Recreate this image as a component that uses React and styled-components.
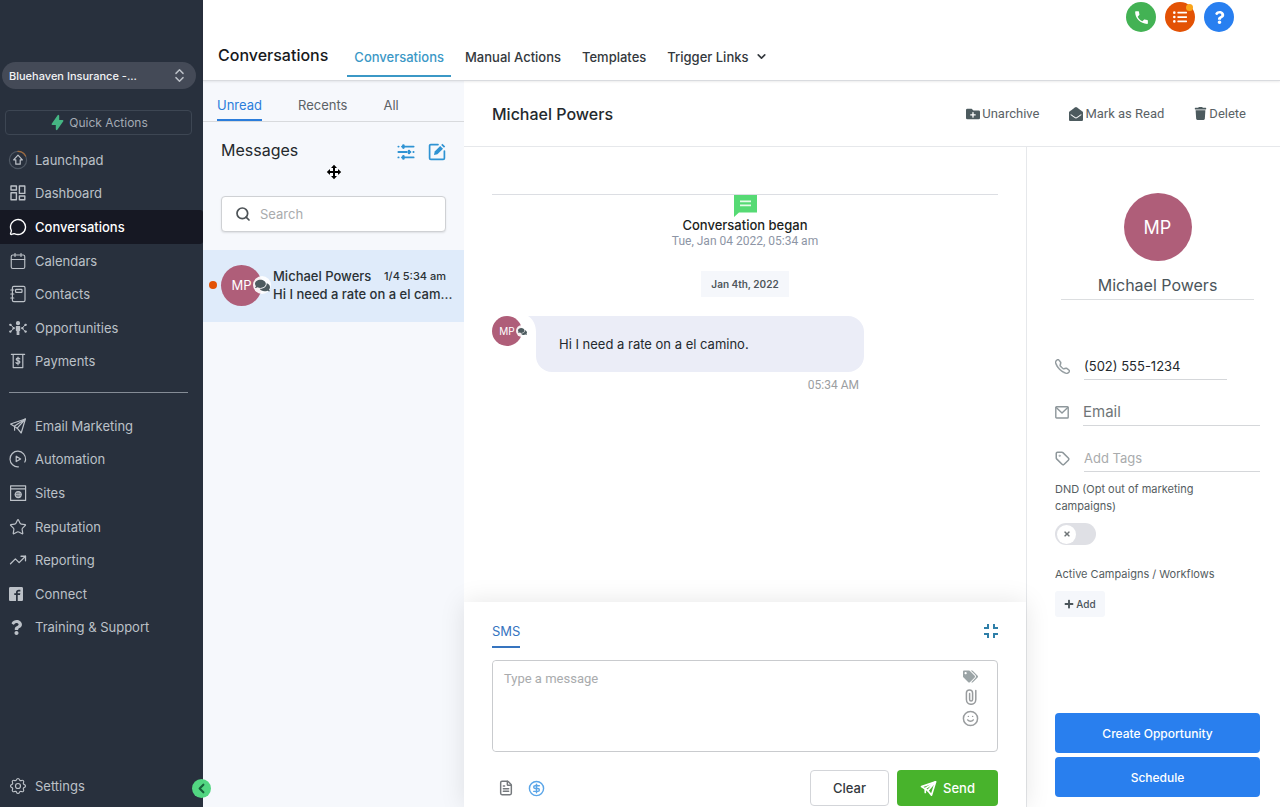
import React, { useState } from 'react';
import styled, { createGlobalStyle } from 'styled-components';
import {
  Calendar,
  ChevronDown,
  ChevronLeft,
  ChevronsUpDown,
  CircleDollarSign,
  FileText,
  MessageCircle,
  Search,
  Smile,
  Star,
  Tag,
  TrendingUp
} from 'lucide-react';
import {
  FaComments,
  FaEnvelopeOpen,
  FaFolderPlus,
  FaListUl,
  FaPlus,
  FaQuestion,
  FaTags,
  FaTimes,
  FaTrash
} from 'react-icons/fa';
import { BsTelephone } from 'react-icons/bs';
import { HiLightningBolt } from 'react-icons/hi';
import { ImFacebook2 } from 'react-icons/im';
import { MdPhone } from 'react-icons/md';
import { TbSettings } from 'react-icons/tb';

const stroke = {
  fill: 'none',
  stroke: 'currentColor',
  strokeWidth: 1.2,
  strokeLinecap: 'round',
  strokeLinejoin: 'round'
};

const LaunchpadIcon = () => (
  <svg width="20" height="20" viewBox="0 0 20 20" {...stroke}>
    <circle cx="10" cy="10" r="8.6" stroke="#4f5864" />
    <path d="M10 1.4A8.6 8.6 0 0 1 17.6 6" stroke="#a06a3c" />
    <path d="M10 5.2l4.4 4.6h-2.2v4.4H7.8V9.8H5.6z" />
  </svg>
);

const DashboardIcon = () => (
  <svg width="18" height="18" viewBox="0 0 18 18" {...stroke} strokeWidth="1.4">
    <rect x="2" y="2" width="5.4" height="4" />
    <rect x="2" y="8.8" width="5.4" height="7" />
    <rect x="10.4" y="2" width="5.4" height="7.4" />
    <rect x="10.4" y="12" width="5.4" height="3.8" />
  </svg>
);

const ContactsIcon = () => (
  <svg width="18" height="18" viewBox="0 0 18 18" {...stroke}>
    <rect x="3.4" y="1.4" width="12.6" height="15.2" rx="1.4" />
    <rect x="6.6" y="4.4" width="6.4" height="3" rx="0.6" />
    <path d="M1.8 5h3M1.8 9h3M1.8 13h3" />
  </svg>
);

const OpportunitiesIcon = () => (
  <svg width="18" height="18" viewBox="0 0 18 18" {...stroke}>
    <circle cx="9" cy="4.2" r="1.5" fill="currentColor" />
    <path d="M7.4 7.6h3.2v3.6l-.8.6v3.6H8.2v-3.6l-.8-.6z" fill="currentColor" />
    <path d="M2 6.2l2.4 2.4M4.4 9.8L2 12.2M16 6.2l-2.4 2.4M13.6 9.8l2.4 2.4" strokeWidth="1" />
    <path d="M1.2 5.8h.4M1.2 12.6h.4M16.4 5.8h.4M16.4 12.6h.4M4.4 9.2h.4M13.2 9.2h.4" strokeWidth="2.2" />
  </svg>
);

const PaymentsIcon = () => (
  <svg width="18" height="18" viewBox="0 0 18 18" {...stroke}>
    <path d="M2.4 2.4h13.2M4.2 2.4v13.2h9.6V2.4" />
    <path d="M10.8 6.9c-.4-.6-1-.8-1.8-.8-1 0-1.8.4-1.8 1.2 0 1.8 3.7.9 3.7 2.8 0 .9-.8 1.4-1.9 1.4-.9 0-1.6-.3-2-.9M9 5v7.8" />
  </svg>
);

const PlaneIcon = ({ size = 18, weight = 1.2 }) => (
  <svg width={size} height={size} viewBox="0 0 18 18" {...stroke} strokeWidth={weight}>
    <path d="M1.6 7L16.4 2 12.2 16 8.2 11.2z" />
    <path d="M8.2 11.2L16.4 2 5.6 9v4.2" />
  </svg>
);

const AutomationIcon = () => (
  <svg width="18" height="18" viewBox="0 0 18 18" {...stroke}>
    <path d="M9.4 16.8A7.8 7.8 0 1 1 16.6 9.6c-.1.9-.4 1.7-.8 2.4" />
    <path d="M7.2 6.2v5.4l4.4-2.7z" />
  </svg>
);

const SitesIcon = () => (
  <svg width="18" height="18" viewBox="0 0 18 18" {...stroke}>
    <path d="M1.6 1.8h15v14.6h-15zM1.6 4.8h15" />
    <circle cx="9.2" cy="10.6" r="3" />
    <path d="M6.2 10.6h6M9.2 7.6v6M8 8v5M10.4 8v5" strokeWidth="0.8" />
  </svg>
);

const SlidersIcon = () => (
  <svg width="18" height="16" viewBox="0 0 18 16" {...stroke} strokeWidth="1.9">
    <path d="M1.4 2.6h.2M5 2.6h11.6M1.4 8h8.4M13 8h.4M16.4 8h.2M1.4 13.4h.2M5 13.4h11.6" />
    <path d="M6.4 1.6v2M12 7v2M6.4 12.4v2" strokeWidth="2.6" />
  </svg>
);

const ComposeIcon = () => (
  <svg width="18" height="18" viewBox="0 0 18 18" {...stroke} strokeWidth="1.7">
    <path d="M10 1.6H2.8c-.7 0-1.2.5-1.2 1.2v12.4c0 .7.5 1.2 1.2 1.2h12.4c.7 0 1.2-.5 1.2-1.2V8" />
    <path d="M6 12l.7-3.4 5.5-5.6 2.8 2.7-5.6 5.6z" fill="currentColor" stroke="none" />
    <path d="M13.2 2l1.2-1.2 2.8 2.8L16 4.8z" fill="currentColor" stroke="none" />
  </svg>
);

const StartedIcon = () => (
  <svg width="23" height="22" viewBox="0 0 23 22">
    <path d="M0 0h23v17.4H5L0 22z" fill="#56da74" />
    <path d="M6 6.4h11M6 10.4h11" stroke="#e4fbe9" strokeWidth="1.6" />
  </svg>
);

const CollapseIcon = () => (
  <svg width="14" height="14" viewBox="0 0 14 14" fill="none" stroke="currentColor" strokeWidth="2">
    <path d="M0 4h4V0M10 0v4h4M0 10h4v4M10 14v-4h4" />
  </svg>
);

const ClipIcon = () => (
  <svg width="12" height="16" viewBox="0 0 12 16" {...stroke} strokeWidth="1.5">
    <path d="M10.8 1.4v9.2a4.6 4.6 0 0 1-9.4 0V4a3 3 0 0 1 6.2 0v6.4a1.5 1.5 0 0 1-3 0V4.6" />
  </svg>
);

const MailIcon = () => (
  <svg width="14" height="13" viewBox="0 0 14 13" {...stroke} strokeWidth="1.4">
    <rect x="0.8" y="0.8" width="12.4" height="11.2" rx="0.8" />
    <path d="M1.2 1.4L7 7l5.8-5.6" />
  </svg>
);

const MoveCursor = () => (
  <svg width="16" height="16" viewBox="0 0 16 16">
    <path
      d="M8 .8l3 3.2H9v3h3V5l3.2 3L12 11V9H9v3h2l-3 3.2L5 12h2V9H4v2L.8 8 4 5v2h3V4H5z"
      fill="#000"
      stroke="#fff"
      strokeWidth="1"
      paintOrder="stroke"
    />
  </svg>
);

const mainLinks = [
  { label: 'Launchpad', icon: <LaunchpadIcon /> },
  { label: 'Dashboard', icon: <DashboardIcon /> },
  { label: 'Conversations', icon: <MessageCircle size={18} strokeWidth={1.8} />, active: true },
  { label: 'Calendars', icon: <Calendar size={18} strokeWidth={1.5} /> },
  { label: 'Contacts', icon: <ContactsIcon /> },
  { label: 'Opportunities', icon: <OpportunitiesIcon /> },
  { label: 'Payments', icon: <PaymentsIcon /> }
];

const toolLinks = [
  { label: 'Email Marketing', icon: <PlaneIcon /> },
  { label: 'Automation', icon: <AutomationIcon /> },
  { label: 'Sites', icon: <SitesIcon /> },
  { label: 'Reputation', icon: <Star size={18} strokeWidth={1.6} /> },
  { label: 'Reporting', icon: <TrendingUp size={18} strokeWidth={1.7} /> },
  { label: 'Connect', icon: <ImFacebook2 size={14} />, flush: true },
  { label: 'Training & Support', icon: <FaQuestion size={15} />, flush: true }
];

const NavLinks = ({ links }) => (
  <NavGroup>
    {links.map(l => (
      <NavItem key={l.label} href="#" $active={l.active}>
        <NavIcon $flush={l.flush}>{l.icon}</NavIcon>
        {l.label}
      </NavItem>
    ))}
  </NavGroup>
);

const App = () => {
  const [dnd, setDnd] = useState(false);

  return (
    <Page>
      <GlobalStyle />
      <Sidebar>
        <Account>
          <AccountSelect aria-label="Account">
            <option>Bluehaven Insurance -...</option>
          </AccountSelect>
          <ChevronsUpDown size={17} strokeWidth={2} />
        </Account>
        <QuickActions>
          <HiLightningBolt size={17} color="#45b583" />
          Quick Actions
        </QuickActions>
        <NavLinks links={mainLinks} />
        <Divider />
        <NavLinks links={toolLinks} />
        <SidebarFooter>
          <NavItem href="#">
            <NavIcon>
              <TbSettings size={20} strokeWidth={1.4} />
            </NavIcon>
            Settings
          </NavItem>
          <CloseSidebar aria-label="Collapse menu">
            <ChevronLeft size={15} strokeWidth={3.4} />
          </CloseSidebar>
        </SidebarFooter>
      </Sidebar>

      <Main>
        <TopBar>
          <TopActions>
            <RoundButton $color="#43b254" aria-label="Call">
              <MdPhone size={17} />
            </RoundButton>
            <RoundButton $color="#e35205" aria-label="Tasks">
              <FaListUl size={14} />
              <Dot />
            </RoundButton>
            <RoundButton $color="#287ff0" aria-label="Help">
              <FaQuestion size={13} />
            </RoundButton>
          </TopActions>
          <TopNav>
            <Title>Conversations</Title>
            <TopLink href="#" $active>
              Conversations
            </TopLink>
            <TopLink href="#">Manual Actions</TopLink>
            <TopLink href="#">Templates</TopLink>
            <TopLink href="#">
              Trigger Links
              <ChevronDown size={13} strokeWidth={3} />
            </TopLink>
          </TopNav>
        </TopBar>

        <Content>
          <Inbox>
            <InboxTabs>
              <InboxTab href="#" $active>
                Unread
              </InboxTab>
              <InboxTab href="#">Recents</InboxTab>
              <InboxTab href="#">All</InboxTab>
            </InboxTabs>
            <InboxHeader>
              <InboxTitle>Messages</InboxTitle>
              <IconButton $color="#2f93d3" aria-label="Filter">
                <SlidersIcon />
              </IconButton>
              <IconButton $color="#2f93d3" aria-label="New message">
                <ComposeIcon />
              </IconButton>
              <Pointer>
                <MoveCursor />
              </Pointer>
            </InboxHeader>
            <SearchBox>
              <Search size={16} strokeWidth={2.6} />
              <SearchInput placeholder="Search" aria-label="Search" />
            </SearchBox>
            <Thread href="#">
              <UnreadDot />
              <Avatar $size={41} $font={13}>
                MP
                <Badge $size={18}>
                  <FaComments size={15} />
                </Badge>
              </Avatar>
              <ThreadBody>
                <ThreadTop>
                  Michael Powers
                  <ThreadTime>1/4 5:34 am</ThreadTime>
                </ThreadTop>
                <Preview>Hi I need a rate on a el cam...</Preview>
              </ThreadBody>
            </Thread>
          </Inbox>

          <Conversation>
            <ContactBar>
              <ContactTitle>Michael Powers</ContactTitle>
              <ContactAction>
                <FaFolderPlus size={14} />
                Unarchive
              </ContactAction>
              <ContactAction>
                <FaEnvelopeOpen size={14} />
                Mark as Read
              </ContactAction>
              <ContactAction>
                <FaTrash size={13} />
                Delete
              </ContactAction>
            </ContactBar>
            <Panels>
              <Chat>
                <History>
                  <Began>
                    <StartedIcon />
                    <BeganTitle>Conversation began</BeganTitle>
                    <BeganDate>Tue, Jan 04 2022, 05:34 am</BeganDate>
                  </Began>
                  <DayLabel>Jan 4th, 2022</DayLabel>
                  <Message>
                    <Avatar $size={30} $font={10}>
                      MP
                      <Badge $size={12}>
                        <FaComments size={9} />
                      </Badge>
                    </Avatar>
                    <Tail viewBox="0 0 14 16">
                      <path d="M0 0h14v16H8C8 9 5 3 0 0z" fill="#ebedf7" />
                    </Tail>
                    <Bubble>Hi I need a rate on a el camino.</Bubble>
                  </Message>
                  <MessageTime>05:34 AM</MessageTime>
                </History>
                <Composer>
                  <ComposerTop>
                    <ComposerTab href="#">SMS</ComposerTab>
                    <IconButton $color="#2f7fa8" aria-label="Shrink">
                      <CollapseIcon />
                    </IconButton>
                  </ComposerTop>
                  <MessageBox>
                    <MessageInput placeholder="Type a message" aria-label="Message" />
                    <MessageTools>
                      <IconButton $color="#9ba4a6" aria-label="Tags">
                        <FaTags size={15} />
                      </IconButton>
                      <IconButton $color="#999c9e" aria-label="Attach">
                        <ClipIcon />
                      </IconButton>
                      <IconButton $color="#999c9e" aria-label="Emoji">
                        <Smile size={17} strokeWidth={2.1} />
                      </IconButton>
                    </MessageTools>
                  </MessageBox>
                  <ComposerBottom>
                    <IconButton $color="#75797d" aria-label="Templates">
                      <FileText size={16} strokeWidth={2.2} />
                    </IconButton>
                    <IconButton $color="#5aa5e8" aria-label="Request payment">
                      <CircleDollarSign size={17} strokeWidth={2} />
                    </IconButton>
                    <ClearButton>Clear</ClearButton>
                    <SendButton>
                      <PlaneIcon size={17} weight={1.8} />
                      Send
                    </SendButton>
                  </ComposerBottom>
                </Composer>
              </Chat>

              <Details>
                <Avatar $size={68} $font={18}>
                  MP
                </Avatar>
                <DetailsName>Michael Powers</DetailsName>
                <Field htmlFor="phone">
                  <BsTelephone size={15} stroke="currentColor" strokeWidth={0.5} aria-label="Phone" />
                  <FieldInput id="phone" defaultValue="(502) 555-1234" $short />
                </Field>
                <Field htmlFor="email">
                  <MailIcon />
                  <FieldInput id="email" placeholder="Email" $large />
                </Field>
                <Field htmlFor="tags">
                  <Tag size={15} strokeWidth={2.4} />
                  <FieldInput id="tags" placeholder="Add Tags" />
                </Field>
                <SmallLabel htmlFor="dnd">DND (Opt out of marketing campaigns)</SmallLabel>
                <Toggle>
                  <ToggleInput
                    id="dnd"
                    type="checkbox"
                    checked={dnd}
                    onChange={e => setDnd(e.target.checked)}
                  />
                  <ToggleKnob>{!dnd && <FaTimes size={8} />}</ToggleKnob>
                </Toggle>
                <SmallText>Active Campaigns / Workflows</SmallText>
                <AddButton>
                  <FaPlus size={10} />
                  Add
                </AddButton>
                <DetailsFooter>
                  <PrimaryButton>Create Opportunity</PrimaryButton>
                  <PrimaryButton>Schedule</PrimaryButton>
                </DetailsFooter>
              </Details>
            </Panels>
          </Conversation>
        </Content>
      </Main>
    </Page>
  );
};

const GlobalStyle = createGlobalStyle`
  * {
    box-sizing: border-box;
  }

  body {
    margin: 0;
    font-family: Inter, sans-serif;
    font-size: 13px;
    color: #2a3135;
    background: #fff;
  }

  button, input, select, textarea {
    font: inherit;
    color: inherit;
    margin: 0;
    outline: none;
  }

  button {
    display: flex;
    align-items: center;
    justify-content: center;
    padding: 0;
    border: 0;
    background: none;
    cursor: pointer;
  }

  a {
    color: inherit;
    text-decoration: none;
  }

  svg {
    display: block;
    flex: none;
  }
`;

const Page = styled.div`
  display: flex;
  min-height: 100vh;
`;

const Sidebar = styled.nav`
  display: flex;
  flex-direction: column;
  flex: 0 0 203px;
  padding-top: 62px;
  background: #28303d;
  color: #bcc1c8;
`;

const Account = styled.div`
  display: grid;
  grid-template-columns: 1fr 34px;
  align-items: center;
  height: 27px;
  margin: 0 7px 0 2px;
  border-radius: 14px;
  background: #444a57;
`;

const AccountSelect = styled.select`
  grid-area: 1 / 1 / 2 / 3;
  height: 27px;
  padding: 0 34px 0 7px;
  border: 0;
  background: transparent;
  appearance: none;
  color: #f2f3f5;
  font-size: 11px;
  font-weight: 500;

  & + svg {
    grid-area: 1 / 2;
    justify-self: center;
    pointer-events: none;
  }
`;

const QuickActions = styled.button`
  gap: 3px;
  height: 25px;
  margin: 21px 11px 8px 5px;
  border: 1px solid #3d4653;
  border-radius: 4px;
  font-size: 12px;
  color: #a3aab4;
`;

const NavGroup = styled.div`
  display: flex;
  flex-direction: column;
  min-height: 235px;
`;

const NavItem = styled.a`
  display: flex;
  flex: 1;
  align-items: center;
  gap: 7px;
  padding-left: 8px;
  border-radius: 0 3px 3px 0;
  font-weight: ${props => (props.$active ? 500 : 400)};
  color: ${props => (props.$active ? '#fff' : '#bcc1c8')};
  background: ${props => (props.$active ? '#161823' : 'transparent')};
`;

const NavIcon = styled.span`
  display: flex;
  justify-content: ${props => (props.$flush ? 'flex-start' : 'center')};
  width: 20px;
  padding-left: ${props => (props.$flush ? '1px' : '0')};
`;

const Divider = styled.hr`
  height: 1px;
  margin: 14px 15px 16px 9px;
  border: 0;
  background: #858c96;
`;

const SidebarFooter = styled.div`
  display: flex;
  position: relative;
  height: 34px;
  margin: auto 0 4px;
`;

const CloseSidebar = styled.button`
  position: absolute;
  right: -8px;
  bottom: 5px;
  z-index: 2;
  width: 19px;
  height: 19px;
  border-radius: 50%;
  background: #52d681;
  color: #17603a;
`;

const Main = styled.main`
  display: flex;
  flex: 1;
  flex-direction: column;
  min-width: 0;
`;

const TopBar = styled.header`
  position: relative;
  z-index: 1;
  border-bottom: 1px solid #d9dbdf;
  box-shadow: 0 1px 2px rgba(0, 0, 0, 0.08);
`;

const TopActions = styled.div`
  display: flex;
  justify-content: flex-end;
  gap: 9px;
  padding: 2px 46px 0 0;
`;

const RoundButton = styled.button`
  position: relative;
  width: 30px;
  height: 30px;
  border-radius: 50%;
  color: #fff;
  background: ${props => props.$color};
`;

const Dot = styled.span`
  position: absolute;
  top: 2px;
  right: 2px;
  width: 7px;
  height: 7px;
  border-radius: 50%;
  background: #faa51a;
`;

const TopNav = styled.div`
  display: flex;
  align-items: flex-end;
  gap: 7px;
  height: 48px;
  padding: 0 15px 3px;
`;

const Title = styled.h1`
  margin: 0 12px 0 0;
  font-size: 16px;
  line-height: 44px;
  font-weight: 500;
  color: #17191c;
`;

const TopLink = styled.a`
  display: flex;
  align-items: center;
  gap: 6px;
  height: 42px;
  padding: 3px 7px 0;
  font-weight: 500;
  color: ${props => (props.$active ? '#3b98c6' : '#33383d')};
  border-bottom: 2px solid ${props => (props.$active ? '#3b98c6' : 'transparent')};
`;

const Content = styled.div`
  display: flex;
  flex: 1;
`;

const Inbox = styled.section`
  flex: 0 0 261px;
  min-width: 0;
  background: #f6f8fc;
`;

const InboxTabs = styled.div`
  display: flex;
  gap: 36px;
  height: 41px;
  padding: 0 14px;
  border-bottom: 1px solid #d8dadd;
`;

const InboxTab = styled.a`
  display: flex;
  align-items: center;
  padding-top: 10px;
  color: ${props => (props.$active ? '#2b7ddb' : '#5c6266')};
  border-bottom: 2px solid ${props => (props.$active ? '#2b7ddb' : 'transparent')};
`;

const IconButton = styled.button`
  color: ${props => props.$color};
`;

const InboxHeader = styled.div`
  display: flex;
  position: relative;
  align-items: flex-start;
  gap: 13px;
  padding: 18px 18px 0;

  ${IconButton} {
    height: 24px;
  }
`;

const InboxTitle = styled.h2`
  flex: 1;
  margin: 0;
  font-size: 16px;
  line-height: 20px;
  font-weight: 400;
  color: #24292d;
`;

const Pointer = styled.div`
  position: absolute;
  left: 123px;
  top: 42px;
`;

const SearchBox = styled.div`
  display: flex;
  align-items: center;
  gap: 9px;
  height: 36px;
  margin: 32px 18px 18px;
  padding: 0 13px;
  border: 1px solid #cfd1d4;
  border-radius: 4px;
  background: #fff;
  color: #4d5357;
  box-shadow: 0 1px 2px rgba(0, 0, 0, 0.1);
`;

const SearchInput = styled.input`
  width: 100%;
  border: 0;
  padding: 0;
  background: none;

  &::placeholder {
    color: #a9abad;
  }
`;

const Thread = styled.a`
  display: flex;
  align-items: center;
  gap: 4px;
  height: 72px;
  padding: 0 10px 2px 6px;
  background: #dfebfa;
`;

const UnreadDot = styled.span`
  width: 8px;
  height: 8px;
  border-radius: 50%;
  background: #e35205;
`;

const Avatar = styled.div`
  display: flex;
  position: relative;
  align-items: center;
  justify-content: center;
  flex: none;
  width: ${props => props.$size}px;
  height: ${props => props.$size}px;
  border-radius: 50%;
  font-size: ${props => props.$font}px;
  color: #fff;
  background: #af5e79;
`;

const Badge = styled.span`
  display: flex;
  position: absolute;
  align-items: center;
  justify-content: center;
  right: ${props => props.$size / -2}px;
  width: ${props => props.$size}px;
  height: ${props => props.$size}px;
  border-radius: 50%;
  color: #4d5b5f;
  background: rgba(255, 255, 255, 0.9);
`;

const ThreadBody = styled.div`
  flex: 1;
  min-width: 0;
  margin-left: 7px;
  font-weight: 500;
  line-height: 18px;
`;

const ThreadTop = styled.div`
  display: flex;
  justify-content: space-between;
  margin-right: 8px;
`;

const ThreadTime = styled.span`
  font-size: 11px;
`;

const Preview = styled.div`
  white-space: nowrap;
`;

const Conversation = styled.section`
  display: flex;
  flex: 1;
  flex-direction: column;
  min-width: 0;
`;

const ContactBar = styled.div`
  display: flex;
  align-items: center;
  gap: 30px;
  height: 66px;
  padding: 0 34px 0 28px;
  border-bottom: 1px solid #e6e8eb;
`;

const ContactTitle = styled.h2`
  flex: 1;
  margin: 0;
  font-size: 16px;
  font-weight: 500;
  color: #24292d;
`;

const ContactAction = styled.button`
  gap: 2px;
  font-family: Roboto, sans-serif;
  font-size: 13px;
  color: #5a6266;

  svg {
    color: #4d5b5f;
  }
`;

const Panels = styled.div`
  display: flex;
  flex: 1;
`;

const Chat = styled.div`
  display: flex;
  flex: 1;
  flex-direction: column;
  min-width: 0;
`;

const History = styled.div`
  display: flex;
  flex: 1;
  flex-direction: column;
  padding: 47px 28px 0;
`;

const Began = styled.div`
  display: flex;
  flex-direction: column;
  align-items: center;
  border-top: 1px solid #dcdee3;
`;

const BeganTitle = styled.div`
  line-height: 16px;
  font-weight: 500;
  color: #1c1f22;
`;

const BeganDate = styled.div`
  font-family: Roboto, sans-serif;
  font-size: 12px;
  line-height: 16px;
  color: #8d95a5;
`;

const DayLabel = styled.div`
  align-self: center;
  margin: 22px 0 19px;
  padding: 0 10px;
  font-size: 10px;
  line-height: 26px;
  font-weight: 600;
  color: #4f565b;
  background: #f5f7fb;
`;

const Message = styled.div`
  display: flex;
  margin-right: 134px;
`;

const Tail = styled.svg`
  width: 14px;
  height: 16px;
  margin-right: -6px;
  margin-left: 6px;
`;

const Bubble = styled.div`
  flex: 1;
  padding: 20px 23px;
  border-radius: 0 16px 16px 16px;
  line-height: 16px;
  color: #24292d;
  background: #ebedf7;
`;

const MessageTime = styled.div`
  margin: 5px 139px 0 0;
  font-family: Roboto, sans-serif;
  font-size: 12px;
  line-height: 16px;
  text-align: right;
  color: #9b9ea1;
`;

const Composer = styled.div`
  position: relative;
  padding: 20px 28px 1px;
  background: #fff;
  box-shadow: 0 0 24px rgba(0, 0, 0, 0.1);
`;

const ComposerTop = styled.div`
  display: flex;
  align-items: flex-start;
  justify-content: space-between;
`;

const ComposerTab = styled.a`
  padding-bottom: 6px;
  line-height: 18px;
  color: #3674bf;
  border-bottom: 2px solid #3674bf;

  & + button {
    padding-top: 2px;
  }
`;

const MessageBox = styled.div`
  display: flex;
  height: 92px;
  margin: 12px 0 18px;
  border: 1px solid #c9cbce;
  border-radius: 4px;
`;

const MessageInput = styled.textarea`
  flex: 1;
  padding: 10px 11px;
  border: 0;
  border-radius: 4px;
  resize: none;
  font-family: Roboto, sans-serif;
  font-size: 13px;
  line-height: 16px;

  &::placeholder {
    color: #a9abad;
  }
`;

const MessageTools = styled.div`
  display: flex;
  flex-direction: column;
  align-items: center;
  gap: 5px;
  padding: 8px 18px 0 0;
`;

const ComposerBottom = styled.div`
  display: flex;
  align-items: center;
  gap: 14px;
  padding-left: 6px;
`;

const FormButton = styled.button`
  height: 36px;
  border-radius: 4px;
  font-weight: 500;
  font-size: 13px;
`;

const ClearButton = styled(FormButton)`
  width: 79px;
  margin-left: auto;
  border: 1px solid #d3d5d9;
  color: #33383d;
`;

const SendButton = styled(FormButton)`
  gap: 6px;
  width: 101px;
  margin-left: -6px;
  color: #fff;
  background: #48b32c;
`;

const Details = styled.aside`
  display: flex;
  flex-direction: column;
  align-items: flex-start;
  flex: 0 0 254px;
  min-width: 0;
  padding: 46px 20px 10px 28px;
  border-left: 1px solid #e6e8eb;

  & > ${Avatar} {
    align-self: center;
  }
`;

const DetailsName = styled.h3`
  align-self: stretch;
  margin: 10px 6px 53px;
  padding: 4px 0;
  border-bottom: 1px solid #dcdee0;
  font-size: 16px;
  line-height: 20px;
  font-weight: 400;
  text-align: center;
  color: #4b555b;
`;

const Field = styled.label`
  display: flex;
  align-self: stretch;
  align-items: center;
  gap: 14px;
  height: 26px;
  margin-bottom: 20px;
  color: #8e979b;
`;

const FieldInput = styled.input`
  flex: 1;
  min-width: 0;
  height: 27px;
  margin-right: ${props => (props.$short ? '33px' : '0')};
  padding: 0;
  border: 0;
  border-bottom: 1px solid #d5d7da;
  font-size: ${props => (props.$large ? '15px' : '13px')};
  color: #24292d;

  &::placeholder {
    color: ${props => (props.$large ? '#6f7577' : '#a9abad')};
  }
`;

const SmallLabel = styled.label`
  margin: -10px 24px 0 0;
  font-size: 11px;
  line-height: 17px;
  color: #555d61;
`;

const SmallText = styled.div`
  margin-bottom: 8px;
  font-size: 11px;
  line-height: 17px;
  color: #555d61;
`;

const Toggle = styled.div`
  display: grid;
  align-items: center;
  margin: 8px 0 21px;
`;

const ToggleInput = styled.input`
  grid-area: 1 / 1;
  appearance: none;
  width: 41px;
  height: 22px;
  border-radius: 11px;
  background: ${props => (props.checked ? '#287ff0' : '#dfe0e5')};
  cursor: pointer;
`;

const ToggleKnob = styled.span`
  display: flex;
  grid-area: 1 / 1;
  align-items: center;
  justify-content: center;
  width: 19px;
  height: 19px;
  margin: 0 2px;
  border-radius: 50%;
  color: #6f7577;
  background: #fff;
  pointer-events: none;

  ${ToggleInput}:checked + & {
    justify-self: end;
  }
`;

const AddButton = styled.button`
  gap: 2px;
  width: 50px;
  height: 26px;
  border-radius: 3px;
  font-size: 10px;
  font-weight: 500;
  color: #4b555b;
  background: #f5f7fb;
`;

const DetailsFooter = styled.div`
  display: flex;
  align-self: stretch;
  flex-direction: column;
  gap: 4px;
  margin-top: auto;
`;

const PrimaryButton = styled.button`
  height: 40px;
  border-radius: 4px;
  font-size: 12px;
  font-weight: 500;
  color: #fff;
  background: #297fee;
`;

export default App;
